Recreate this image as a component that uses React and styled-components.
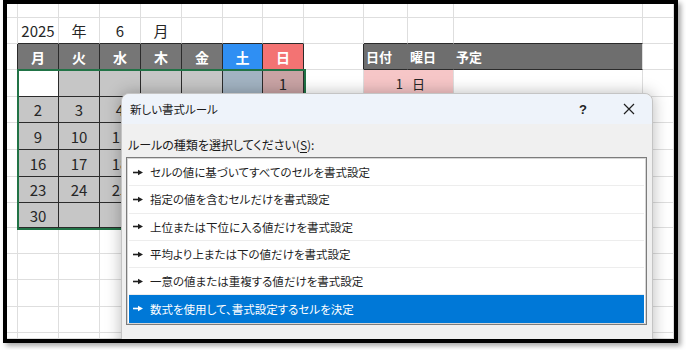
import React from 'react';
import styled, { createGlobalStyle } from 'styled-components';

const GlobalStyle = createGlobalStyle`
  html, body {
    margin: 0;
    padding: 0;
    background: #ffffff;
  }
  body {
    width: 686px;
    height: 350px;
    overflow: hidden;
    font-family: "Noto Sans CJK JP", "Noto Sans", sans-serif;
  }
`;

const COLS = [11, 41, 41, 41, 41, 41, 40, 41, 60, 44, 46, 189, 31];
const ROWS = [14, 26, 26, 27, 26, 27, 27, 26, 25, 26, 26, 27, 26, 6];

const GRID = '#dedede';
const INK = '#2b2b2b';

// dates behind the dialog (木〜日 from the 2nd week on) are left out
const WEEKS = [
  ['', '', '', '', '', '', '1'],
  ['2', '3', '4', '', '', '', ''],
  ['9', '10', '11', '', '', '', ''],
  ['16', '17', '18', '', '', '', ''],
  ['23', '24', '25', '', '', '', ''],
  ['30', '', '', '', '', '', ''],
];

const DAYS = ['月', '火', '水', '木', '金', '土', '日'];

const RULES = [
  'セルの値に基づいてすべてのセルを書式設定',
  '指定の値を含むセルだけを書式設定',
  '上位または下位に入る値だけを書式設定',
  '平均より上または下の値だけを書式設定',
  '一意の値または重複する値だけを書式設定',
  '数式を使用して、書式設定するセルを決定',
];

// one object per cell of the sheet, row by row
function buildSheet() {
  const cells = [];
  ROWS.forEach((_, r) => {
    COLS.forEach((__, c) => {
      const cell = { key: `${r}-${c}`, text: '', r: GRID, b: GRID };

      // 2025 年 6 月
      if (r === 1) {
        cell.text = ['', '2025', '年', '6', '月'][c] || '';
        cell.size = 15;
        if (c >= 1 && c <= 7) cell.b = INK;
        if (c >= 9 && c <= 11) cell.b = INK;
      }

      // week header + schedule header
      if (r === 2) {
        if (c === 0) cell.r = INK;
        if (c >= 1 && c <= 7) {
          cell.text = DAYS[c - 1];
          cell.bg = c === 6 ? '#2f8ff3' : c === 7 ? '#f37373' : '#767676';
          cell.color = '#ffffff';
          cell.bold = true;
          cell.size = 14;
          cell.r = INK;
          cell.b = INK;
        }
        if (c === 8) cell.r = INK;
        if (c >= 9 && c <= 11) {
          cell.text = ['日付', '曜日', '予定'][c - 9];
          cell.bg = '#6e6e6e';
          cell.color = '#ffffff';
          cell.bold = true;
          cell.size = 13;
          cell.align = 'flex-start';
          cell.pad = 2;
          cell.r = c === 11 ? GRID : '#6e6e6e';
          cell.b = INK;
        }
      }

      // date rows
      if (r >= 3 && r <= 8) {
        const week = WEEKS[r - 3];
        if (c === 0) cell.r = INK;
        if (c >= 1 && c <= 7) {
          const blank = r === 3 && c === 1;
          cell.text = week[c - 1];
          cell.bg = blank ? '#ffffff' : c === 6 ? '#a2b3c2' : c === 7 ? '#c9a3a4' : '#c6c6c6';
          cell.size = 15;
          cell.r = INK;
          cell.b = INK;
        }
      }

      // first schedule row
      if (r === 3 && (c === 9 || c === 10)) {
        cell.bg = '#f6c6c7';
        cell.r = c === 9 ? '#f6c6c7' : GRID;
        cell.text = c === 9 ? '1' : '日';
        cell.size = 13;
        cell.align = c === 9 ? 'flex-end' : 'flex-start';
        cell.pad = 4;
      }

      cells.push(cell);
    });
  });
  return cells;
}

function RuleArrow() {
  return (
    <svg width="10" height="7" viewBox="0 0 10 7">
      <rect x="0" y="2.7" width="6" height="1.6" fill="currentColor" />
      <path d="M5 0.8 L10 3.5 L5 6.2 Z" fill="currentColor" />
    </svg>
  );
}

function CloseIcon() {
  return (
    <svg width="12" height="12" viewBox="0 0 12 12">
      <path d="M1 1 L11 11 M11 1 L1 11" stroke="#1f1f1f" strokeWidth="1.2" />
    </svg>
  );
}

function App() {
  const cells = buildSheet();

  return (
    <>
      <GlobalStyle />
      <Frame>
        <Sheet>
          {cells.map(cell => (
            <Cell
              key={cell.key}
              $bg={cell.bg}
              $r={cell.r}
              $b={cell.b}
              $color={cell.color}
              $bold={cell.bold}
              $size={cell.size}
              $align={cell.align}
              $pad={cell.pad}
            >
              {cell.text}
            </Cell>
          ))}
        </Sheet>
        <Selection />

        <Dialog>
          <TitleBar>
            <Title>新しい書式ルール</Title>
            <TitleButton>?</TitleButton>
            <TitleButton>
              <CloseIcon />
            </TitleButton>
          </TitleBar>
          <DialogBody>
            <Label>
              ルールの種類を選択してください(<u>S</u>):
            </Label>
            <RuleList>
              {RULES.map((rule, i) => (
                <RuleItem key={rule} $selected={i === RULES.length - 1}>
                  <RuleArrow />
                  <span>{rule}</span>
                </RuleItem>
              ))}
            </RuleList>
          </DialogBody>
        </Dialog>
      </Frame>
    </>
  );
}

const Frame = styled.div`
  position: relative;
  box-sizing: border-box;
  margin-left: 3px;
  width: 675px;
  height: 343px;
  border: 4px solid #000000;
  box-shadow: 3px 3px 5px rgba(0, 0, 0, 0.35);
  overflow: hidden;
  background: #ffffff;
`;

const Sheet = styled.div`
  display: grid;
  grid-template-columns: ${COLS.map(w => `${w}px`).join(' ')};
  grid-template-rows: ${ROWS.map(h => `${h}px`).join(' ')};
`;

const Cell = styled.div`
  box-sizing: border-box;
  display: flex;
  align-items: center;
  justify-content: ${p => p.$align || 'center'};
  padding: 0 ${p => p.$pad || 0}px;
  background: ${p => p.$bg || '#ffffff'};
  border-right: 1px solid ${p => p.$r};
  border-bottom: 1px solid ${p => p.$b};
  color: ${p => p.$color || '#262626'};
  font-size: ${p => p.$size || 14}px;
  font-weight: ${p => (p.$bold ? 700 : 400)};
  white-space: nowrap;
  overflow: hidden;
`;

const Selection = styled.div`
  position: absolute;
  left: 10px;
  top: 65px;
  width: 289px;
  height: 161px;
  box-sizing: border-box;
  border: 2px solid #217346;
  pointer-events: none;
`;

const Dialog = styled.div`
  position: absolute;
  left: 114px;
  top: 89px;
  width: 532px;
  height: 262px;
  box-sizing: border-box;
  display: flex;
  flex-direction: column;
  background: #f0f0f0;
  border: 1px solid #c4c4c4;
  border-radius: 8px 8px 0 0;
  box-shadow: 0 0 16px rgba(0, 0, 0, 0.28);
`;

const TitleBar = styled.div`
  display: flex;
  align-items: center;
  height: 30px;
  padding-left: 8px;
  background: #eef3fa;
  border-radius: 8px 8px 0 0;
`;

const Title = styled.div`
  flex: 1;
  font-size: 11.5px;
  font-feature-settings: "palt";
  color: #1a1a1a;
`;

const TitleButton = styled.div`
  display: flex;
  align-items: center;
  justify-content: center;
  width: 46px;
  height: 30px;
  font-family: "Liberation Sans", sans-serif;
  font-size: 13px;
  font-weight: 700;
  color: #222222;
`;

const DialogBody = styled.div`
  display: flex;
  flex-direction: column;
  padding: 12px 5px 0 4px;
`;

const Label = styled.div`
  height: 18px;
  line-height: 18px;
  padding-left: 2px;
  font-size: 12px;
  font-feature-settings: "palt";
  color: #1a1a1a;

  u {
    text-underline-offset: 2px;
  }
`;

const RuleList = styled.div`
  margin-top: 3px;
  box-sizing: border-box;
  height: 168px;
  padding: 1px 2px;
  background: #ffffff;
  border: 1px solid #7c7c7c;
  box-shadow: inset 0 0 0 1px #d6d6d6;
`;

const RuleItem = styled.div`
  box-sizing: border-box;
  display: flex;
  align-items: center;
  gap: 7px;
  height: 27.3px;
  padding-left: 4px;
  border-bottom: 1px solid ${p => (p.$selected ? '#0078d7' : '#ededed')};
  background: ${p => (p.$selected ? '#0078d7' : '#ffffff')};
  color: ${p => (p.$selected ? '#ffffff' : '#1f1f1f')};
  font-size: 11.5px;
  font-feature-settings: "palt";
  white-space: nowrap;
`;

export default App;
